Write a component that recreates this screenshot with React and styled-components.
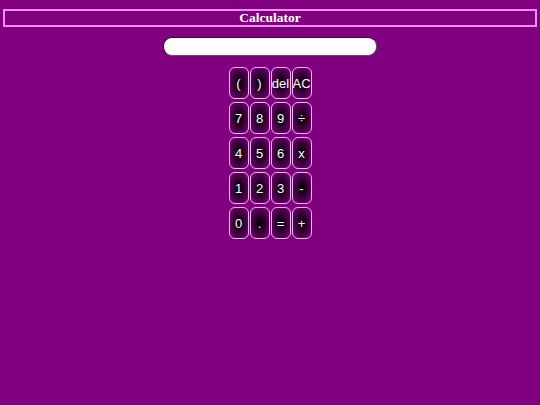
import React from 'react'
import styled, { createGlobalStyle } from 'styled-components'

const GlobalStyle = createGlobalStyle`
    html, body {
        margin: 0;
        padding: 0;
        background: #800080;
    }
`

const Page = styled.div`
    padding: 9px 3px 0 3px;
    display: flex;
    flex-direction: column;
    align-items: center;
`

const Title = styled.h1`
    box-sizing: border-box;
    width: 100%;
    margin: 0;
    height: 18px;
    border: 2px solid #ee90ee;
    font-family: 'Liberation Serif', serif;
    font-weight: 700;
    font-size: 13.5px;
    line-height: 14px;
    color: #fff;
    text-align: center;
`

const Display = styled.input`
    box-sizing: border-box;
    margin-top: 10px;
    width: 214px;
    height: 19px;
    border-radius: 9px;
    border: 1px solid #555;
    border-top-color: #111;
    border-left-color: #111;
    background: #fff;
    outline: none;
`

const Keypad = styled.div`
    margin-top: 11px;
    display: grid;
    grid-template-columns: repeat(4, 20px);
    grid-auto-rows: 32px;
    column-gap: 1px;
    row-gap: 3px;
`

const Key = styled.button`
    box-sizing: border-box;
    padding: 0;
    border: 1px solid #f0b8f0;
    border-radius: 6px;
    background: radial-gradient(ellipse at center, #000 0%, #300030 40%, #800080 100%);
    color: #fff;
    font-family: 'Liberation Sans', Arial, sans-serif;
    font-size: 13px;
    overflow: visible;
    white-space: nowrap;
    display: flex;
    align-items: center;
    justify-content: center;
`

const keys = ['(', ')', 'del', 'AC', '7', '8', '9', '÷', '4', '5', '6', 'x', '1', '2', '3', '-', '0', '.', '=', '+']

const App = () => {
    return (
        <>
            <GlobalStyle />
            <Page>
                <Title>Calculator</Title>
                <Display type="text" />
                <Keypad>
                    {keys.map(k => <Key key={k}>{k}</Key>)}
                </Keypad>
            </Page>
        </>
    )
}

export default App
